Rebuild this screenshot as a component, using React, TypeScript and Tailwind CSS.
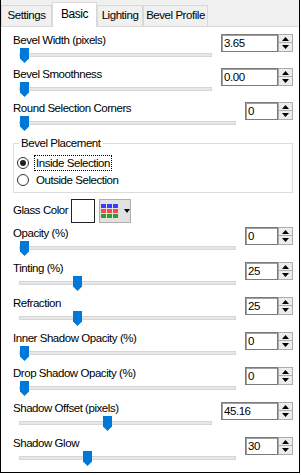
import React from 'react';

type Row = { label: string; value: string; wide?: boolean; pos: number };

const topRows: Row[] = [
  { label: 'Bevel Width (pixels)', value: '3.65', wide: true, pos: 0 },
  { label: 'Bevel Smoothness', value: '0.00', wide: true, pos: 0 },
  { label: 'Round Selection Corners', value: '0', pos: 0 },
];

const bottomRows: Row[] = [
  { label: 'Opacity (%)', value: '0', pos: 0 },
  { label: 'Tinting (%)', value: '25', pos: 53 },
  { label: 'Refraction', value: '25', pos: 53 },
  { label: 'Inner Shadow Opacity (%)', value: '0', pos: 0 },
  { label: 'Drop Shadow Opacity (%)', value: '0', pos: 0 },
  { label: 'Shadow Offset (pixels)', value: '45.16', wide: true, pos: 83 },
  { label: 'Shadow Glow', value: '30', pos: 63 },
];

const tabs = [
  { label: 'Settings', w: 'w-[51px]' },
  { label: 'Basic', w: 'w-[45px]', active: true },
  { label: 'Lighting', w: 'w-[46px]' },
  { label: 'Bevel Profile', w: 'w-[65px]' },
];

function Arrow({ up }: { up?: boolean }) {
  return (
    <svg width="7" height="4" viewBox="0 0 7 4">
      {up ? <path d="M0 4 L3.5 0 L7 4 Z" fill="#000" /> : <path d="M0 0 L7 0 L3.5 4 Z" fill="#000" />}
    </svg>
  );
}

function Spin({ value, wide }: { value: string; wide?: boolean }) {
  return (
    <div className="flex h-[18px] mt-[1px]">
      <div
        className={`${wide ? 'w-[57px]' : 'w-[33px]'} h-full bg-white border border-[#7a7a7a] shadow-[inset_1px_1px_0_#a0a0a0] pl-[2px] leading-[16px]`}
      >
        {value}
      </div>
      <div className="w-[15px] h-full flex flex-col">
        <div className="h-[9px] bg-[#ececec] border border-[#acacac] flex items-center justify-center">
          <Arrow up />
        </div>
        <div className="h-[9px] bg-[#ececec] border border-t-0 border-[#acacac] flex items-center justify-center">
          <Arrow />
        </div>
      </div>
    </div>
  );
}

function SliderRow({ row, h }: { row: Row; h: string }) {
  return (
    <div className={`flex ${h} pl-[12px] pr-[6px]`}>
      <div className="flex-1 min-w-0">
        <div className="h-[14px] leading-[14px] whitespace-nowrap">{row.label}</div>
        <div className="relative ml-[6px] mr-[9px] mt-[6px] h-[4px] bg-[#e7e7e7] border border-[#d6d6d6]">
          <svg
            className="absolute top-[-6px]"
            style={{ left: row.pos }}
            width="9"
            height="15"
            viewBox="0 0 9 15"
          >
            <path d="M0 0 H9 V10.5 L4.5 15 L0 10.5 Z" fill="#0078d7" />
          </svg>
        </div>
      </div>
      <Spin value={row.value} wide={row.wide} />
    </div>
  );
}

function Radio({ checked, label, focus }: { checked?: boolean; label: string; focus?: boolean }) {
  return (
    <div className="flex items-center h-[17px] ml-[3px]">
      <div className="w-[12px] h-[12px] rounded-full border border-[#333] bg-white flex items-center justify-center">
        {checked && <div className="w-[6px] h-[6px] rounded-full bg-[#222]" />}
      </div>
      <span
        className={`ml-[5px] px-[1px] leading-[14px] border ${focus ? 'border-dotted border-black' : 'border-transparent'}`}
      >
        {label}
      </span>
    </div>
  );
}

export default function App() {
  const colors = ['#3b3bff', '#ff4747', '#2f9e2f'];

  return (
    <div className="w-[301px] h-[475px] bg-white font-['Liberation_Sans',Arial,sans-serif] text-[11.5px] tracking-[-0.45px] text-black">
      <div className="w-[300px] h-[473px] border-l border-r border-b border-black flex flex-col">
        {/* tab strip */}
        <div className="h-[26px] bg-[#f0f0f0] flex items-end">
          {tabs.map((t) =>
            t.active ? (
              <div
                key={t.label}
                className={`${t.w} h-[25px] -mb-[1px] relative z-10 bg-white border-t border-l border-r border-[#d9d9d9] flex items-center justify-center pb-[2px] text-[12px]`}
              >
                {t.label}
              </div>
            ) : (
              <div
                key={t.label}
                className={`${t.w} h-[21px] bg-[#f0f0f0] border-t border-l border-r border-[#d9d9d9] flex items-center justify-center`}
              >
                {t.label}
              </div>
            )
          )}
        </div>

        {/* panel */}
        <div className="flex-1 bg-white border-t border-[#d9d9d9] pt-[6px]">
          {topRows.map((r) => (
            <SliderRow key={r.label} row={r} h="h-[34px]" />
          ))}

          <fieldset className="ml-[12px] mr-[6px] mt-[1px] border border-[#dcdcdc] pb-[4px]">
            <legend className="ml-[5px] px-[2px] leading-[14px]">Bevel Placement</legend>
            <div className="mt-[4px]">
              <Radio checked focus label="Inside Selection" />
              <Radio label="Outside Selection" />
            </div>
          </fieldset>

          <div className="flex items-center h-[24px] mt-[6px] pl-[12px]">
            <span className="w-[58px] whitespace-nowrap">Glass Color</span>
            <div className="w-[24px] h-[24px] border border-[#222] bg-white" />
            <div className="ml-[4px] w-[32px] h-[24px] bg-[#e1e1e1] border border-[#adadad] flex items-center pl-[1px]">
              <div className="grid grid-cols-3 gap-[1px]">
                {colors.map((c) =>
                  [0, 1, 2].map((i) => (
                    <div key={c + i} className="w-[5px] h-[4px]" style={{ backgroundColor: c }} />
                  ))
                )}
              </div>
              <svg className="ml-[6px]" width="6" height="4" viewBox="0 0 6 4">
                <path d="M0 0 H6 L3 4 Z" fill="#000" />
              </svg>
            </div>
          </div>

          <div className="mt-[3px]">
            {bottomRows.map((r) => (
              <SliderRow key={r.label} row={r} h="h-[35px]" />
            ))}
          </div>
        </div>
      </div>
    </div>
  );
}
